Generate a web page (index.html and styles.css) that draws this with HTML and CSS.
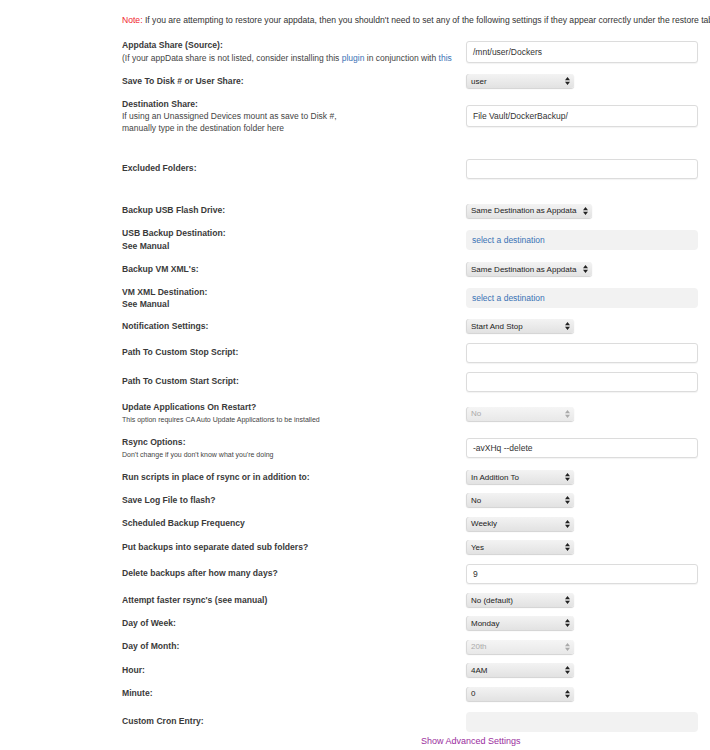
FILE: index.html
```html
<!DOCTYPE html>
<html>
<head>
<meta charset="utf-8">
<link rel="stylesheet" href="styles.css">
</head>
<body>
<div class="page">
  <div class="note"><span class="note-red">Note:</span> If you are attempting to restore your appdata, then you shouldn't need to set any of the following settings if they appear correctly under the restore tab</div>

  <div class="form">
    <div class="row h26">
      <div class="lab"><b>Appdata Share (Source):</b><span class="sub">(If your appData share is not listed, consider installing this <a>plugin</a> in conjunction with <a>this</a></span></div>
      <div class="input tall">/mnt/user/Dockers</div>
    </div>

    <div class="row">
      <div class="lab"><b>Save To Disk # or User Share:</b></div>
      <div class="select"><span>user</span><svg class="arr" viewBox="0 0 5 8" width="5" height="8"><path d="M0 3.2L2.5 0L5 3.2ZM0 4.8L2.5 8L5 4.8Z"/></svg></div>
    </div>

    <div class="row">
      <div class="lab lh12"><b>Destination Share:</b><span class="sub">If using an Unassigned Devices mount as save to Disk #,</span><span class="sub">manually type in the destination folder here</span></div>
      <div class="input tall">File Vault/DockerBackup/</div>
    </div>

    <div class="row far">
      <div class="lab"><b>Excluded Folders:</b></div>
      <div class="input"></div>
    </div>

    <div class="row far">
      <div class="lab"><b>Backup USB Flash Drive:</b></div>
      <div class="select wide"><span>Same Destination as Appdata</span><svg class="arr" viewBox="0 0 5 8" width="5" height="8"><path d="M0 3.2L2.5 0L5 3.2ZM0 4.8L2.5 8L5 4.8Z"/></svg></div>
    </div>

    <div class="row">
      <div class="lab"><b>USB Backup Destination:</b><b>See Manual</b></div>
      <div class="dest"><a>select a destination</a></div>
    </div>

    <div class="row">
      <div class="lab"><b>Backup VM XML's:</b></div>
      <div class="select wide"><span>Same Destination as Appdata</span><svg class="arr" viewBox="0 0 5 8" width="5" height="8"><path d="M0 3.2L2.5 0L5 3.2ZM0 4.8L2.5 8L5 4.8Z"/></svg></div>
    </div>

    <div class="row">
      <div class="lab lh12"><b>VM XML Destination:</b><b>See Manual</b></div>
      <div class="dest"><a>select a destination</a></div>
    </div>

    <div class="row">
      <div class="lab"><b>Notification Settings:</b></div>
      <div class="select"><span>Start And Stop</span><svg class="arr" viewBox="0 0 5 8" width="5" height="8"><path d="M0 3.2L2.5 0L5 3.2ZM0 4.8L2.5 8L5 4.8Z"/></svg></div>
    </div>

    <div class="row">
      <div class="lab"><b>Path To Custom Stop Script:</b></div>
      <div class="input"></div>
    </div>

    <div class="row">
      <div class="lab"><b>Path To Custom Start Script:</b></div>
      <div class="input"></div>
    </div>

    <div class="row">
      <div class="lab"><b>Update Applications On Restart?</b><span class="small">This option requires CA Auto Update Applications to be installed</span></div>
      <div class="select disabled"><span>No</span><svg class="arr" viewBox="0 0 5 8" width="5" height="8"><path d="M0 3.2L2.5 0L5 3.2ZM0 4.8L2.5 8L5 4.8Z"/></svg></div>
    </div>

    <div class="row">
      <div class="lab"><b>Rsync Options:</b><span class="small">Don't change if you don't know what you're doing</span></div>
      <div class="input">-avXHq --delete</div>
    </div>

    <div class="row">
      <div class="lab"><b>Run scripts in place of rsync or in addition to:</b></div>
      <div class="select"><span>In Addition To</span><svg class="arr" viewBox="0 0 5 8" width="5" height="8"><path d="M0 3.2L2.5 0L5 3.2ZM0 4.8L2.5 8L5 4.8Z"/></svg></div>
    </div>

    <div class="row">
      <div class="lab"><b>Save Log File to flash?</b></div>
      <div class="select"><span>No</span><svg class="arr" viewBox="0 0 5 8" width="5" height="8"><path d="M0 3.2L2.5 0L5 3.2ZM0 4.8L2.5 8L5 4.8Z"/></svg></div>
    </div>

    <div class="row">
      <div class="lab"><b>Scheduled Backup Frequency</b></div>
      <div class="select"><span>Weekly</span><svg class="arr" viewBox="0 0 5 8" width="5" height="8"><path d="M0 3.2L2.5 0L5 3.2ZM0 4.8L2.5 8L5 4.8Z"/></svg></div>
    </div>

    <div class="row">
      <div class="lab"><b>Put backups into separate dated sub folders?</b></div>
      <div class="select"><span>Yes</span><svg class="arr" viewBox="0 0 5 8" width="5" height="8"><path d="M0 3.2L2.5 0L5 3.2ZM0 4.8L2.5 8L5 4.8Z"/></svg></div>
    </div>

    <div class="row">
      <div class="lab"><b>Delete backups after how many days?</b></div>
      <div class="input">9</div>
    </div>

    <div class="row">
      <div class="lab"><b>Attempt faster rsync's (see manual)</b></div>
      <div class="select"><span>No (default)</span><svg class="arr" viewBox="0 0 5 8" width="5" height="8"><path d="M0 3.2L2.5 0L5 3.2ZM0 4.8L2.5 8L5 4.8Z"/></svg></div>
    </div>

    <div class="row">
      <div class="lab"><b>Day of Week:</b></div>
      <div class="select"><span>Monday</span><svg class="arr" viewBox="0 0 5 8" width="5" height="8"><path d="M0 3.2L2.5 0L5 3.2ZM0 4.8L2.5 8L5 4.8Z"/></svg></div>
    </div>

    <div class="row">
      <div class="lab"><b>Day of Month:</b></div>
      <div class="select disabled"><span>20th</span><svg class="arr" viewBox="0 0 5 8" width="5" height="8"><path d="M0 3.2L2.5 0L5 3.2ZM0 4.8L2.5 8L5 4.8Z"/></svg></div>
    </div>

    <div class="row">
      <div class="lab"><b>Hour:</b></div>
      <div class="select"><span>4AM</span><svg class="arr" viewBox="0 0 5 8" width="5" height="8"><path d="M0 3.2L2.5 0L5 3.2ZM0 4.8L2.5 8L5 4.8Z"/></svg></div>
    </div>

    <div class="row">
      <div class="lab"><b>Minute:</b></div>
      <div class="select"><span>0</span><svg class="arr" viewBox="0 0 5 8" width="5" height="8"><path d="M0 3.2L2.5 0L5 3.2ZM0 4.8L2.5 8L5 4.8Z"/></svg></div>
    </div>

    <div class="row cron-row">
      <div class="lab"><b>Custom Cron Entry:</b></div>
      <div class="cron"></div>
    </div>

    <div class="adv"><a>Show Advanced Settings</a></div>
  </div>
</div>
</body>
</html>
```

FILE: styles.css
```css
html, body {
  margin: 0;
  padding: 0;
  background: #fff;
  overflow: hidden;
}
body {
  width: 710px;
  height: 750px;
  font-family: "Liberation Sans", Arial, sans-serif;
  color: #333;
}
.page {
  padding: 14px 0 0 122px;
  width: 800px;
}
.note {
  font-size: 8.6px;
  line-height: 13px;
  white-space: nowrap;
  color: #333;
}
.note-red {
  color: #f0232d;
}
.form {
  display: flex;
  flex-direction: column;
  gap: 9.4px;
  margin-top: 12px;
}
.row {
  display: grid;
  grid-template-columns: 344px 232px;
  align-items: center;
}
.row.far {
  margin-top: 15.5px;
}
.row.cron-row {
  margin-top: 2px;
}
.lab {
  display: flex;
  flex-direction: column;
  font-size: 8.6px;
  line-height: 13px;
  white-space: nowrap;
}
.lab.lh12 {
  line-height: 12px;
}
.lab b {
  font-weight: bold;
  color: #3a3a3a;
}
.sub {
  font-size: 8.5px;
  color: #444;
}
.small {
  font-size: 7px;
  line-height: 12px;
  color: #444;
}
a {
  color: #3a72b5;
  text-decoration: none;
}
.input {
  box-sizing: border-box;
  height: 20px;
  border: 1px solid #dcdcdc;
  border-radius: 3px;
  background: #fff;
  box-shadow: 0 1px 1px rgba(0,0,0,0.05);
  font-size: 8.5px;
  line-height: 18px;
  padding-left: 6px;
  color: #333;
}
.input.tall {
  height: 22px;
  line-height: 20px;
}
.select {
  box-sizing: border-box;
  width: 108px;
  height: 14px;
  display: flex;
  align-items: center;
  justify-content: space-between;
  padding: 0 4px 0 5px;
  border-radius: 3px;
  background: linear-gradient(#f3f3f3, #e2e2e2);
  box-shadow: 0 1px 1px rgba(0,0,0,0.18), inset 1px 0 0 #d8d8d8;
  font-size: 8px;
  color: #222;
}
.select.wide {
  width: 126px;
}
.select .arr {
  fill: #222;
}
.select.disabled {
  color: #aaa;
  background: linear-gradient(#f5f5f5, #e8e8e8);
}
.select.disabled .arr {
  fill: #aaa;
}
.dest, .cron {
  box-sizing: border-box;
  height: 20px;
  border-radius: 4px;
  background: #f2f2f2;
  font-size: 8.5px;
  line-height: 20px;
  padding-left: 6px;
}
.adv {
  margin-top: -6.5px;
  padding-left: 299px;
  font-size: 9px;
  line-height: 13px;
}
.adv a {
  color: #9a2d9e;
}
```
